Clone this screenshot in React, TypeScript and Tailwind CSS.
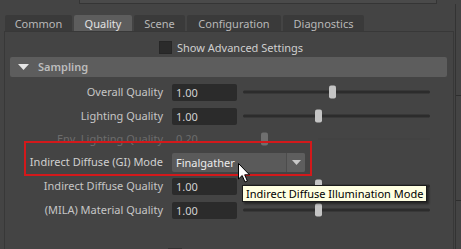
import React from 'react'

const rows = [
  { label: 'Overall Quality', value: '1.00', thumb: 86 },
  { label: 'Lighting Quality', value: '1.00', thumb: 72 },
]

const lowerRows = [
  { label: 'Indirect Diffuse Quality', value: '1.00', thumb: 72 },
  { label: '(MILA) Material Quality', value: '1.00', thumb: 72 },
]

const tabs = [
  { name: 'Common', w: 'w-[67px]' },
  { name: 'Quality', w: 'w-[58px]', active: true },
  { name: 'Scene', w: 'w-[51px]' },
  { name: 'Configuration', w: 'w-[94px]' },
  { name: 'Diagnostics', w: 'w-[81px]' },
]

function Slider({ thumb, disabled }: { thumb: number; disabled?: boolean }) {
  return (
    <div className="relative w-[187px] h-full">
      {disabled ? (
        <div className="absolute left-[75px] right-0 top-1/2 -translate-y-1/2 h-[2px] bg-[#424242]" />
      ) : (
        <div className="absolute left-0 right-0 top-1/2 -translate-y-1/2 h-[3px] rounded-full bg-[#2c2c2c]" />
      )}
      <div
        className={`absolute top-1/2 -translate-y-1/2 w-[7px] h-[13px] rounded-[2px] ${
          disabled ? 'bg-[#6f6f6f]' : 'bg-[#c4c4c4]'
        }`}
        style={{ left: thumb }}
      />
    </div>
  )
}

function NumberRow({ label, value, thumb }: { label: string; value: string; thumb: number }) {
  return (
    <div className="flex items-center h-[24px]">
      <div className="w-[158px] text-right text-[#c6c6c6]">{label}</div>
      <div className="ml-[9px] w-[65px] h-[17px] rounded-[2px] bg-[#2b2b2b] text-[#d2d2d2] pl-[4px] leading-[17px]">
        {value}
      </div>
      <div className="ml-[6px] h-[17px]">
        <Slider thumb={thumb} />
      </div>
    </div>
  )
}

export default function App() {
  return (
    <div className="relative w-[461px] h-[249px] overflow-hidden bg-[#444444] text-[11px] font-['Noto_Sans',_'Liberation_Sans',_sans-serif]">
      <div className="flex h-[4px]">
        <div className="w-[79px]" />
        <div className="w-[358px] bg-[#4a4a4a] border-b border-x border-[#353535]" />
      </div>

      <div className="flex">
        <div className="w-[455px]">
          {/* Tabs */}
          <div className="flex items-end gap-[2px] mt-[10px] pl-[5px] h-[17px]">
            {tabs.map((t) => (
              <div
                key={t.name}
                className={`${t.w} h-[16px] flex items-center justify-center rounded-t-[2px] leading-none ${
                  t.active ? 'bg-[#5d5d5d] text-[#e2e2e2]' : 'bg-[#3a3a3a] text-[#b8b8b8]'
                }`}
              >
                {t.name}
              </div>
            ))}
          </div>

          {/* Panel */}
          <div className="ml-[4px] w-[450px] h-[230px] border-t border-x border-[#383838]">
            <div className="flex items-center h-[12px] mt-[9px] pl-[154px] gap-[5px]">
              <div className="w-[13px] h-[13px] bg-[#2b2b2b] border border-[#262626]" />
              <span className="text-[#cfcfcf] leading-none">Show Advanced Settings</span>
            </div>

            <div className="flex items-center mt-[4px] ml-[5px] w-[437px] h-[20px] rounded-[2px] bg-[#5d5d5d]">
              <svg width="11" height="6" viewBox="0 0 11 6" className="ml-[8px]">
                <path d="M0 0 L11 0 L5.5 6 Z" fill="#e6e6e6" />
              </svg>
              <span className="ml-[9px] font-semibold text-[#bcbcbc]">Sampling</span>
            </div>

            <div className="mt-[3px]">
              {rows.map((r) => (
                <NumberRow key={r.label} {...r} />
              ))}

              <div className="flex items-center h-[22px]">
                <div className="w-[158px] text-right text-[#6c6c6c]">Env. Lighting Quality</div>
                <div className="ml-[9px] w-[65px] pl-[4px] text-[#6c6c6c]">0.20</div>
                <div className="ml-[6px] h-[17px]">
                  <Slider thumb={18} disabled />
                </div>
              </div>

              <div className="flex items-center h-[24px]">
                <div className="w-[158px] text-right text-[#d0d0d0]">Indirect Diffuse (GI) Mode</div>
                <div className="ml-[9px] flex w-[133px] h-[19px] rounded-[2px] bg-[#5a5a5a]">
                  <div className="flex-1 pl-[4px] leading-[19px] text-[#ececec]">Finalgather</div>
                  <div className="w-[19px] flex items-center justify-center border-l border-[#4c4c4c] bg-[#5e5e5e] rounded-r-[2px]">
                    <svg width="9" height="5" viewBox="0 0 9 5">
                      <path d="M0 0 L9 0 L4.5 5 Z" fill="#c8c8c8" />
                    </svg>
                  </div>
                </div>
              </div>

              {lowerRows.map((r) => (
                <NumberRow key={r.label} {...r} />
              ))}
            </div>

            <div className="mt-[26px] ml-[163px] w-[14px] h-[6px] bg-[#333333]" />
          </div>
        </div>

        {/* Right edge */}
        <div className="relative w-[6px] h-[245px] border-l border-[#333333]">
          <div className="absolute left-0 right-0 top-[91px] h-px bg-[#2e2e2e]" />
          <div className="absolute left-0 right-0 top-[196px] h-px bg-[#2e2e2e]" />
        </div>
      </div>

      {/* Annotation box */}
      <div className="absolute left-[24px] top-[141px] w-[288px] h-[35px] border-2 border-[#d3191b]" />

      {/* Tooltip */}
      <div className="absolute left-[242px] top-[185px] h-[17px] px-[3px] bg-[#ffffe1] border border-[#1c1c1c] text-black leading-[15px] whitespace-nowrap shadow-[2px_2px_2px_rgba(0,0,0,0.45)]">
        Indirect Diffuse Illumination Mode
      </div>

      {/* Cursor */}
      <svg className="absolute left-[238px] top-[163px]" width="13" height="20" viewBox="0 0 13 20">
        <path
          d="M0.5 0.5 L0.5 16 L4.2 12.5 L7 19 L9.4 18 L6.7 11.8 L11.5 11.8 Z"
          fill="#ffffff"
          stroke="#000000"
          strokeWidth="1"
          strokeLinejoin="round"
        />
      </svg>
    </div>
  )
}
